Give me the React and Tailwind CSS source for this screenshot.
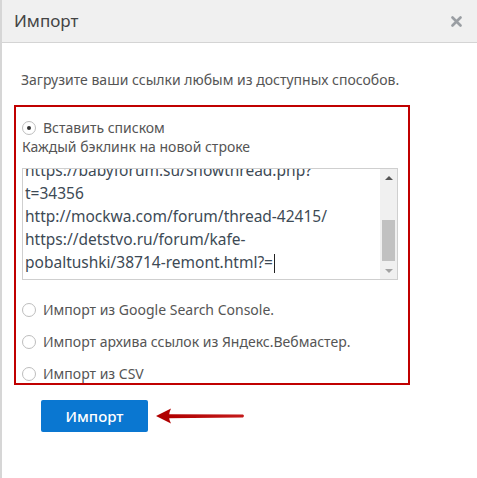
import React from "react";

const links = [
  "https://babyforum.su/showthread.php?",
  "t=34356",
  "http://mockwa.com/forum/thread-42415/",
  "https://detstvo.ru/forum/kafe-",
  "pobaltushki/38714-remont.html?=",
];

function Radio({ checked, label }) {
  return (
    <label className="flex items-center gap-[7px] text-[14px] text-[#555]">
      <span className="w-[14px] h-[14px] rounded-full border border-[#bdbdbd] bg-white flex items-center justify-center">
        {checked && <span className="w-[4px] h-[4px] rounded-full bg-[#333]" />}
      </span>
      {label}
    </label>
  );
}

function Arrow() {
  return (
    <svg width="92" height="20" viewBox="0 0 92 20">
      <defs>
        <linearGradient id="shaft" x1="0" x2="1" y1="0" y2="0">
          <stop offset="0" stopColor="#b00000" />
          <stop offset="1" stopColor="#c41a1a" />
        </linearGradient>
      </defs>
      <path d="M12 8.2 L88 8.6 Q90 10 88 11.4 L12 12.2 Z" fill="url(#shaft)" />
      <path d="M1 10 L16 2.5 Q12 10 16 17.5 Z" fill="#b00000" />
    </svg>
  );
}

export default function App() {
  return (
    <div className="w-[477px] h-[478px] bg-white border-l-2 border-[#d6d6d6] font-['Noto_Sans','Open_Sans',sans-serif] overflow-hidden">
      <header className="h-[43px] bg-[#f0f0f0] border-b border-[#d4d4d4] flex items-center justify-between pl-[12px] pr-[15px]">
        <h1 className="text-[17px] text-[#444]">Импорт</h1>
        <svg width="11" height="11" viewBox="0 0 11 11">
          <path d="M1.5 1.5 L9.5 9.5 M9.5 1.5 L1.5 9.5" stroke="#9a9ea3" strokeWidth="2.6" strokeLinecap="round" />
        </svg>
      </header>

      <div className="pt-[25px] pl-[19px]">
        <p className="text-[14px] text-[#555] leading-[24px]">
          Загрузите ваши ссылки любым из доступных способов.
        </p>

        <div className="mt-[13px] -ml-[7px] w-[396px] h-[280px] border-2 border-[#c00000] overflow-hidden pl-[6px] pt-[10px]">
          <Radio checked label="Вставить списком" />
          <p className="text-[14px] text-[#555] leading-[20px] -mt-[1px]">Каждый бэклинк на новой строке</p>

          <div className="mt-[11px] w-[376px] h-[112px] border border-[#cfcfcf] bg-white flex overflow-hidden">
            <div className="flex-1 pl-[2px] overflow-hidden">
              <div className="-mt-[10px] text-[15.5px] leading-[23px] text-[#3d4a55]">
                {links.map((l, i) => (
                  <div key={i} className="whitespace-nowrap">
                    {l}
                    {i === links.length - 1 && (
                      <span className="inline-block w-px h-[19px] bg-[#222] align-middle ml-px" />
                    )}
                  </div>
                ))}
              </div>
            </div>
            <div className="w-[17px] bg-[#f0f0f0] flex flex-col items-center">
              <div className="h-[17px] flex items-center justify-center">
                <span className="w-0 h-0 border-l-[4px] border-r-[4px] border-b-[4px] border-l-transparent border-r-transparent border-b-[#555]" />
              </div>
              <div className="mt-[34px] w-[13px] h-[41px] bg-[#c1c1c1]" />
              <div className="mt-auto h-[17px] flex items-center justify-center">
                <span className="w-0 h-0 border-l-[4px] border-r-[4px] border-t-[4px] border-l-transparent border-r-transparent border-t-[#a3a3a3]" />
              </div>
            </div>
          </div>

          <div className="mt-[20px] flex flex-col gap-[12px] leading-[20px]">
            <Radio label="Импорт из Google Search Console." />
            <Radio label="Импорт архива ссылок из Яндекс.Вебмастер." />
            <Radio label="Импорт из CSV" />
          </div>
        </div>

        <div className="mt-[15px] ml-[20px] flex items-center gap-[7px]">
          <button className="w-[107px] h-[32px] bg-[#0a77d1] rounded-[2px] text-white text-[15px] font-medium">
            Импорт
          </button>
          <Arrow />
        </div>
      </div>
    </div>
  );
}
